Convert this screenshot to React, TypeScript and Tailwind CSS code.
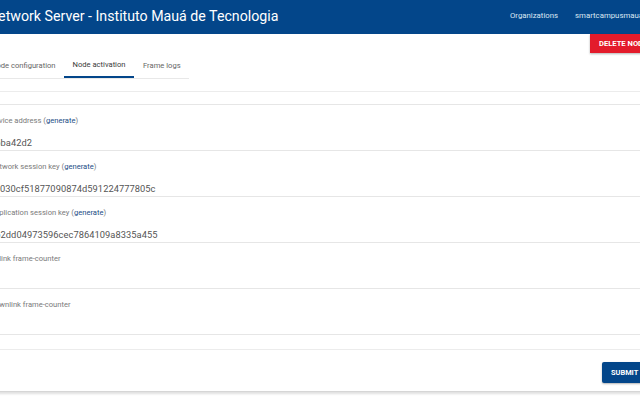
import React from "react";

const Field = ({ label, gen, value }: { label: string; gen?: boolean; value?: string }) => (
  <div className="h-[46px] border-b border-[#e6e6e6] pl-[16px] pt-[11px]">
    <div className="text-[7.6px] leading-[10px] text-[#7a7a7a]">
      {label}
      {gen && (
        <>
          {" ("}
          <span className="text-[#1b4d86]">generate</span>
          {")"}
        </>
      )}
    </div>
    {value && <div className="mt-[11px] text-[9.3px] leading-[12px] text-[#555] tracking-[0.05px]">{value}</div>}
  </div>
);

export default function App() {
  return (
    <div className="w-[640px] h-[400px] overflow-hidden bg-white" style={{ fontFamily: "Roboto, 'Liberation Sans', sans-serif" }}>
      <div className="-ml-[26px] w-[710px]">
        <div className="h-[34px] bg-[#03468a] grid grid-cols-[536px_1fr] items-center">
          <div className="pl-[14px] text-[14.2px] text-white leading-none pb-[1px]">Network Server - Instituto Mauá de Tecnologia</div>
          <div className="flex items-center gap-[17px] text-[7.8px] text-[#dbe6f3] pb-[3px]">
            <span>Organizations</span>
            <span>smartcampusmaua@gmail.com</span>
          </div>
        </div>
        <div className="h-[19px] flex justify-start pl-[616px]">
          <div className="h-[19px] w-[76px] bg-[#e31b2b] text-white text-[7.6px] font-bold flex items-center pl-[9px] shadow-[0_1px_2px_rgba(0,0,0,0.3)]">
            DELETE NODE
          </div>
        </div>
        <div className="w-[215px] h-[26px] border-b border-[#e8e8e8] flex text-[7.6px]">
          <div className="w-[90px] flex items-center pl-[17px] text-[#666]">Node configuration</div>
          <div className="w-[70px] flex items-center justify-center text-[#3a3a3a] border-b-2 border-[#03468a]">Node activation</div>
          <div className="w-[55px] flex items-center pl-[9px] text-[#666]">Frame logs</div>
        </div>
        <div className="mt-[12px] border-t border-[#ececec] h-[13px]" />
        <div className="border-t border-[#e6e6e6] shadow-[0_2px_2px_rgba(0,0,0,0.12)] border-b border-b-[#d6d6d6]">
          <Field label="Device address" gen value="26ba42d2" />
          <Field label="Network session key" gen value="ee030cf51877090874d591224777805c" />
          <Field label="Application session key" gen value="7b2dd04973596cec7864109a8335a455" />
          <Field label="Uplink frame-counter" />
          <Field label="Downlink frame-counter" />
          <div className="h-[14px]" />
          <div className="border-t border-[#ececec] h-[42px] flex items-start pt-[12px] pl-[628px]">
            <div className="h-[21px] w-[52px] bg-[#03468a] rounded-[2px] text-white text-[7.4px] font-bold flex items-center pl-[9px] shadow-[0_1px_2px_rgba(0,0,0,0.3)]">
              SUBMIT
            </div>
          </div>
        </div>
      </div>
    </div>
  );
}
